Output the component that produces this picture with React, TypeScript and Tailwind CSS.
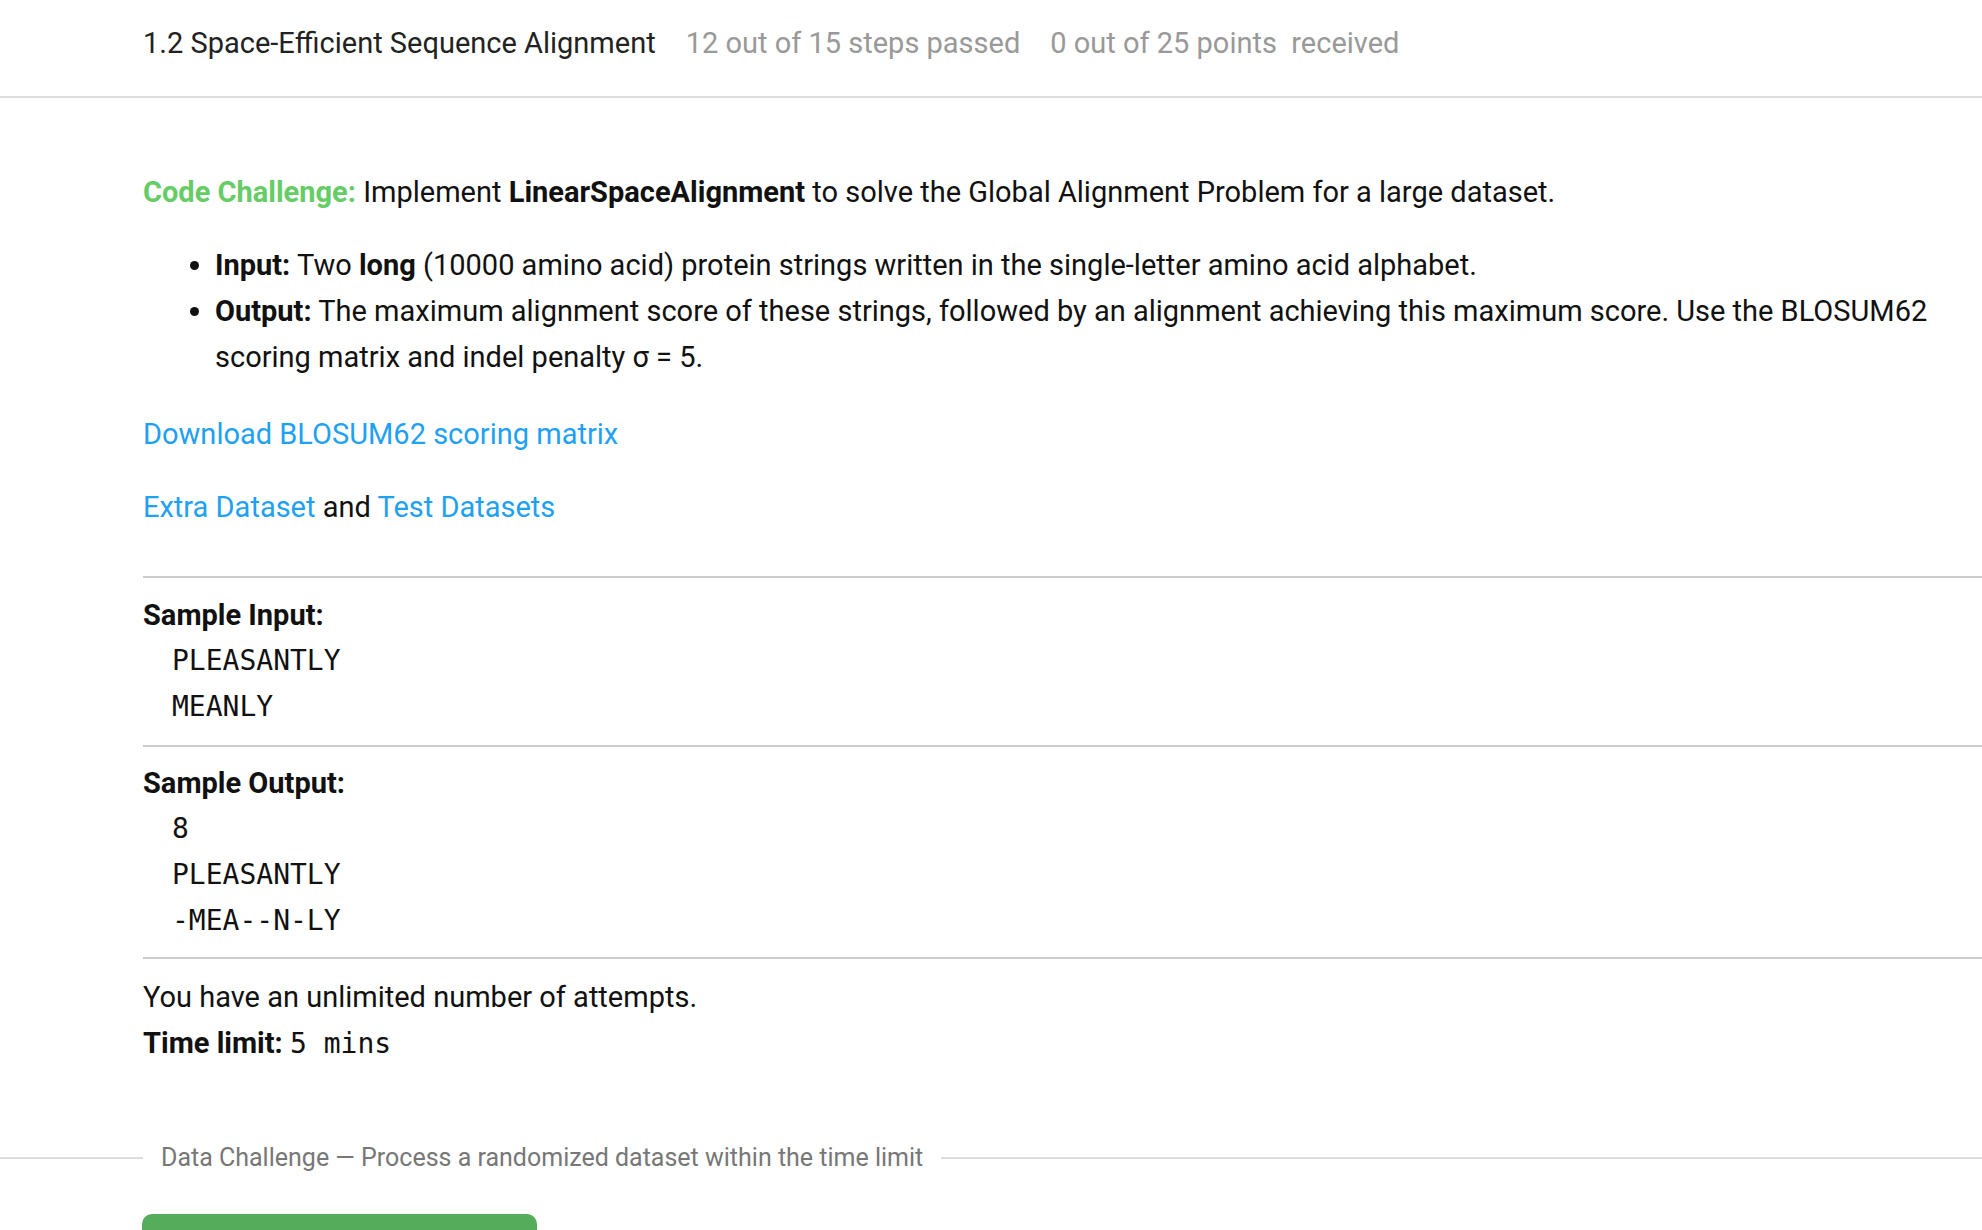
import React from 'react';

const Header: React.FC = () => (
  <header className="h-[98px] border-b-2 border-[#dddddd] flex items-center pl-[143px] pb-[8px]">
    <span className="text-[29px] text-[#222222]">1.2 Space-Efficient Sequence Alignment</span>
    <span className="text-[29px] text-[#999999] ml-[30px]">12 out of 15 steps passed</span>
    <span className="text-[29px] text-[#999999] ml-[30px] whitespace-pre">0 out of 25 points  received</span>
  </header>
);

const CodeLines: React.FC<{ lines: string[] }> = ({ lines }) => (
  <div className="pl-[29px] font-['DejaVu_Sans_Mono',monospace] text-[28px] leading-[46px]">
    {lines.map((l) => (
      <div key={l}>{l}</div>
    ))}
  </div>
);

export default function App() {
  return (
    <div className="h-[1230px] overflow-hidden bg-white text-[#111111] font-['Roboto',sans-serif]">
      <Header />
      <main className="pl-[143px] pt-[71px] text-[29px] leading-[46px]">
        <p>
          <b className="text-[#66cc66] font-bold">Code Challenge:</b> Implement{' '}
          <b className="font-bold">LinearSpaceAlignment</b> to solve the Global Alignment Problem for a large dataset.
        </p>
        <ul className="list-disc pl-[72px] mt-[27px]">
          <li>
            <b>Input:</b> Two <b>long</b> (10000 amino acid) protein strings written in the single-letter amino acid
            alphabet.
          </li>
          <li>
            <b>Output:</b> The maximum alignment score of these strings, followed by an alignment achieving this maximum
            score. Use the BLOSUM62 scoring matrix and indel penalty σ = 5.
          </li>
        </ul>
        <p className="mt-[31px]">
          <a href="#" className="text-[#1ea1f2]">Download BLOSUM62 scoring matrix</a>
        </p>
        <p className="mt-[27px]">
          <a href="#" className="text-[#1ea1f2]">Extra Dataset</a> and{' '}
          <a href="#" className="text-[#1ea1f2]">Test Datasets</a>
        </p>

        <div className="mt-[46px] border-t-2 border-[#cccccc] pt-[14px]">
          <b>Sample Input:</b>
          <CodeLines lines={['PLEASANTLY', 'MEANLY']} />
        </div>
        <div className="mt-[15px] border-t-2 border-[#cccccc] pt-[13px]">
          <b>Sample Output:</b>
          <CodeLines lines={['8', 'PLEASANTLY', '-MEA--N-LY']} />
        </div>
        <div className="mt-[13px] border-t-2 border-[#cccccc] pt-[15px]">
          <p>You have an unlimited number of attempts.</p>
          <p>
            <b>Time limit:</b> <span className="font-['DejaVu_Sans_Mono',monospace] text-[28px]">5 mins</span>
          </p>
        </div>
      </main>

      <div className="mt-[72px] flex items-center">
        <div className="w-[143px] h-[2px] bg-[#dddddd]" />
        <span className="px-[18px] text-[25px] text-[#777777]">
          Data Challenge — Process a randomized dataset within the time limit
        </span>
        <div className="flex-1 h-[2px] bg-[#dddddd]" />
      </div>
      <div className="pl-[142px] mt-[37px]">
        <button className="w-[395px] h-[64px] rounded-[10px] bg-[#55ac5b]" />
      </div>
    </div>
  );
}
